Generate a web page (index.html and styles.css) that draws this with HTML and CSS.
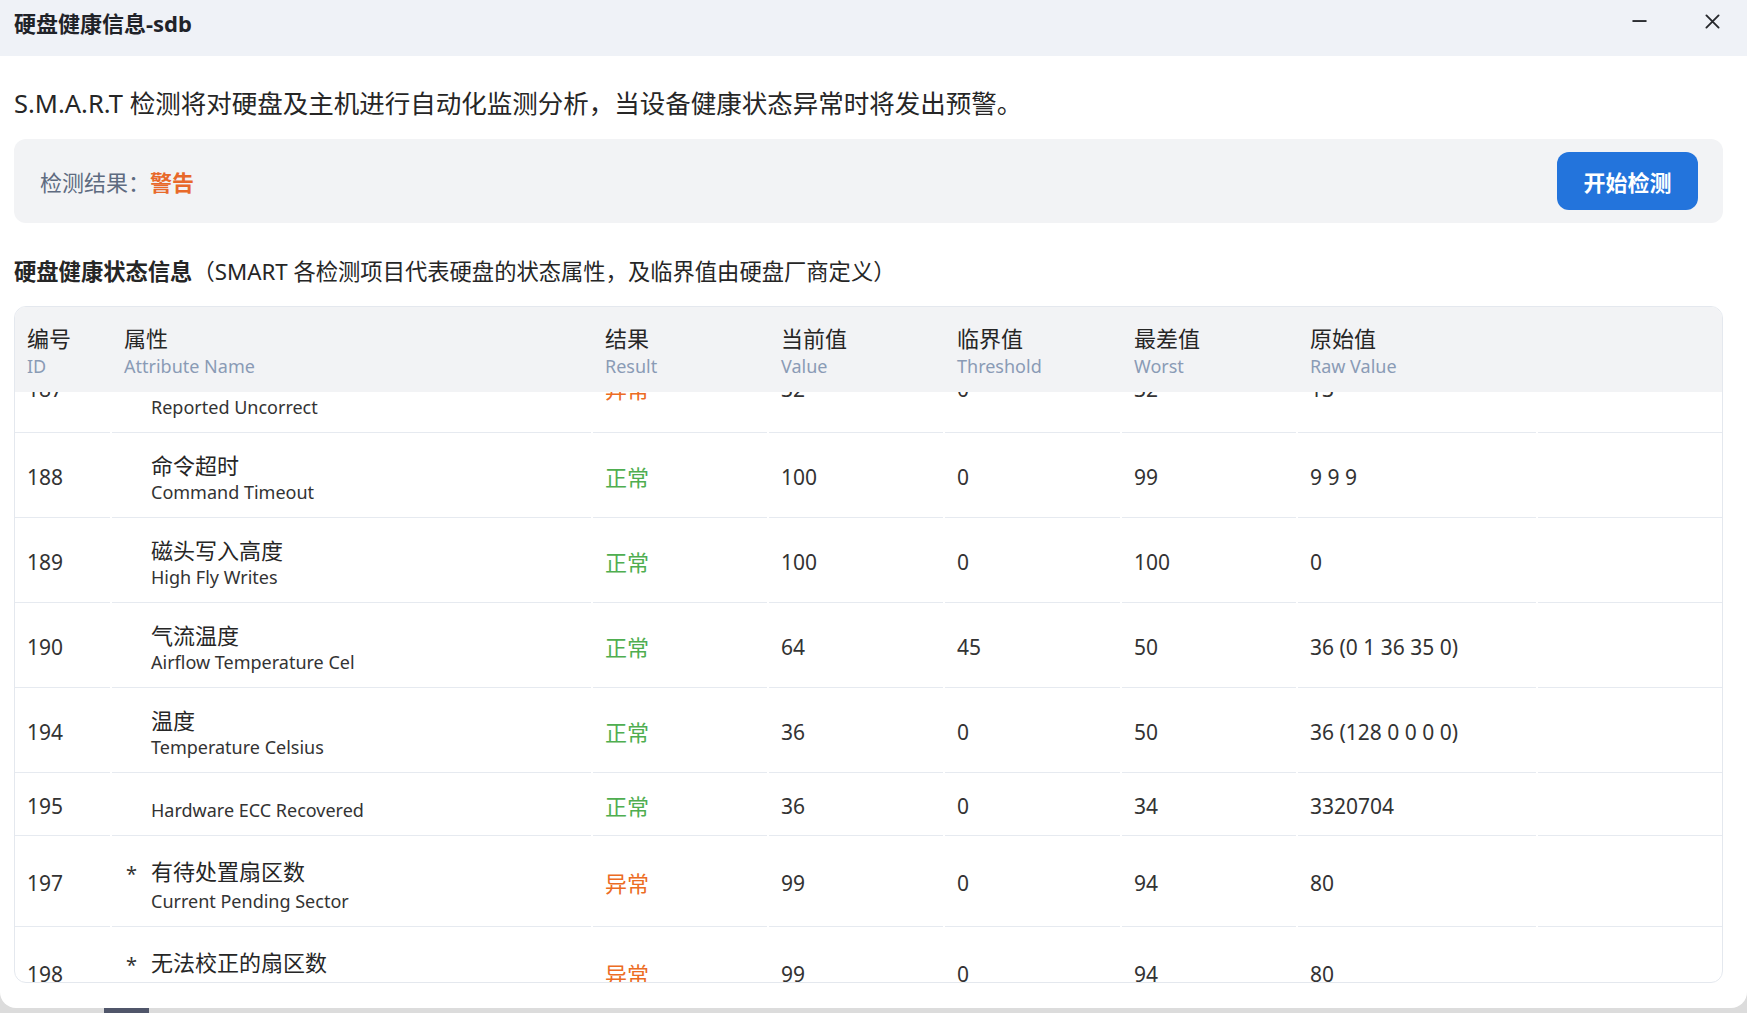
FILE: index.html
```html
<!DOCTYPE html>
<html lang="zh-CN">
<head>
<meta charset="utf-8">
<title>硬盘健康信息-sdb</title>
<link rel="stylesheet" href="styles.css">
</head>
<body>
<div class="window">
  <header class="titlebar">
    <h1 class="title">硬盘健康信息-sdb</h1>
    <div class="controls">
      <button class="ctl" aria-label="最小化"><svg viewBox="0 0 16 16" width="16" height="16"><path d="M0.5 7.5h15" stroke="#26282c" stroke-width="2" fill="none"/></svg></button>
      <button class="ctl" aria-label="关闭"><svg viewBox="0 0 16 16" width="16" height="16"><path d="M1.5 1.5l13 13M14.5 1.5l-13 13" stroke="#26282c" stroke-width="2" fill="none" stroke-linecap="round"/></svg></button>
    </div>
  </header>
  <main class="content">
    <p class="intro">S.M.A.R.T 检测将对硬盘及主机进行自动化监测分析，当设备健康状态异常时将发出预警。</p>
    <section class="result-box">
      <div class="result-label">检测结果：<span class="warn">警告</span></div>
      <button class="btn-primary">开始检测</button>
    </section>
    <h2 class="section-title"><strong>硬盘健康状态信息</strong>（SMART 各检测项目代表硬盘的状态属性，及临界值由硬盘厂商定义）</h2>
    <div class="table">
      <div class="thead grid">
        <div class="th"><span class="th-cn">编号</span><span class="th-en">ID</span></div>
        <div class="th"><span class="th-cn">属性</span><span class="th-en">Attribute Name</span></div>
        <div class="th"><span class="th-cn">结果</span><span class="th-en">Result</span></div>
        <div class="th"><span class="th-cn">当前值</span><span class="th-en">Value</span></div>
        <div class="th"><span class="th-cn">临界值</span><span class="th-en">Threshold</span></div>
        <div class="th"><span class="th-cn">最差值</span><span class="th-en">Worst</span></div>
        <div class="th"><span class="th-cn">原始值</span><span class="th-en">Raw Value</span></div>
        <div class="th"></div>
      </div>
      <div class="tbody">
        <div class="row grid">
          <div class="cell">187</div>
          <div class="cell cell-name flag"><span class="mark">*</span><span class="cn">报告的不可纠正错误</span><span class="en">Reported Uncorrect</span></div>
          <div class="cell"><span class="bad">异常</span></div>
          <div class="cell">32</div><div class="cell">0</div><div class="cell">32</div><div class="cell">13</div><div class="cell"></div>
        </div>
        <div class="row grid">
          <div class="cell">188</div>
          <div class="cell cell-name"><span class="cn">命令超时</span><span class="en">Command Timeout</span></div>
          <div class="cell"><span class="ok">正常</span></div>
          <div class="cell">100</div><div class="cell">0</div><div class="cell">99</div><div class="cell">9 9 9</div><div class="cell"></div>
        </div>
        <div class="row grid">
          <div class="cell">189</div>
          <div class="cell cell-name"><span class="cn">磁头写入高度</span><span class="en">High Fly Writes</span></div>
          <div class="cell"><span class="ok">正常</span></div>
          <div class="cell">100</div><div class="cell">0</div><div class="cell">100</div><div class="cell">0</div><div class="cell"></div>
        </div>
        <div class="row grid">
          <div class="cell">190</div>
          <div class="cell cell-name"><span class="cn">气流温度</span><span class="en">Airflow Temperature Cel</span></div>
          <div class="cell"><span class="ok">正常</span></div>
          <div class="cell">64</div><div class="cell">45</div><div class="cell">50</div><div class="cell">36 (0 1 36 35 0)</div><div class="cell"></div>
        </div>
        <div class="row grid">
          <div class="cell">194</div>
          <div class="cell cell-name"><span class="cn">温度</span><span class="en">Temperature Celsius</span></div>
          <div class="cell"><span class="ok">正常</span></div>
          <div class="cell">36</div><div class="cell">0</div><div class="cell">50</div><div class="cell">36 (128 0 0 0 0)</div><div class="cell"></div>
        </div>
        <div class="row grid">
          <div class="cell">195</div>
          <div class="cell cell-name"><span class="en">Hardware ECC Recovered</span></div>
          <div class="cell"><span class="ok">正常</span></div>
          <div class="cell">36</div><div class="cell">0</div><div class="cell">34</div><div class="cell">3320704</div><div class="cell"></div>
        </div>
        <div class="row grid">
          <div class="cell">197</div>
          <div class="cell cell-name flag"><span class="mark">*</span><span class="cn">有待处置扇区数</span><span class="en">Current Pending Sector</span></div>
          <div class="cell"><span class="bad">异常</span></div>
          <div class="cell">99</div><div class="cell">0</div><div class="cell">94</div><div class="cell">80</div><div class="cell"></div>
        </div>
        <div class="row grid">
          <div class="cell">198</div>
          <div class="cell cell-name flag"><span class="mark">*</span><span class="cn">无法校正的扇区数</span><span class="en">Offline Uncorrectable</span></div>
          <div class="cell"><span class="bad">异常</span></div>
          <div class="cell">99</div><div class="cell">0</div><div class="cell">94</div><div class="cell">80</div><div class="cell"></div>
        </div>
      </div>
    </div>
  </main>
</div>
<div class="taskbar"><span class="task-item"></span></div>
</body>
</html>
```

FILE: styles.css
```css
* { box-sizing: border-box; }
html, body { margin: 0; padding: 0; }
body {
  font-family: "Noto Sans", "Noto Sans CJK SC", sans-serif;
  background: #dcdcdc;
  color: #333;
  width: 1747px;
  height: 1013px;
  overflow: hidden;
}
.window {
  height: 1008px;
  background: #fff;
  border-radius: 0 0 16px 16px;
  overflow: hidden;
  display: flex;
  flex-direction: column;
}
.titlebar {
  height: 56px;
  flex: none;
  background: #eff2f7;
  display: flex;
  align-items: flex-start;
  justify-content: space-between;
  padding: 6px 20px 0 14px;
}
.title {
  margin: 2px 0 0;
  font-size: 22px;
  line-height: 30px;
  font-weight: 700;
  color: #1f2329;
}
.controls { display: flex; gap: 43px; }
.ctl {
  width: 30px;
  height: 30px;
  padding: 0;
  border: 0;
  background: transparent;
  display: flex;
  align-items: center;
  justify-content: center;
}
.ctl svg { width: 15px; height: 15px; }
.content {
  flex: 1;
  display: flex;
  flex-direction: column;
  padding: 0 24px 25px 14px;
}
.intro {
  margin: 30px 0 0;
  font-size: 25.5px;
  line-height: 34px;
  color: #262626;
}
.result-box {
  margin-top: 19px;
  height: 84px;
  flex: none;
  background: #f2f3f5;
  border-radius: 12px;
  display: flex;
  align-items: center;
  justify-content: space-between;
  padding: 0 25px 0 26px;
}
.result-label { font-size: 22px; color: #5e6b80; }
.warn { color: #e8692a; font-weight: 700; }
.btn-primary {
  width: 141px;
  height: 58px;
  border: 0;
  border-radius: 12px;
  background: #2374dc;
  color: #fff;
  font: 700 22px "Noto Sans", "Noto Sans CJK SC", sans-serif;
}
.section-title {
  margin: 34px 0 0;
  font-size: 22.3px;
  line-height: 30px;
  font-weight: 400;
  color: #262626;
}
.section-title strong { font-weight: 700; }
.table {
  margin-top: 19px;
  height: 677px;
  flex: none;
  border: 1px solid #e4e8ee;
  border-radius: 12px;
  overflow: hidden;
}
.grid {
  display: grid;
  grid-template-columns: 95px 479px 174px 174px 175px 174px 238px 1fr;
  column-gap: 2px;
}
.thead {
  position: sticky;
  top: 0;
  z-index: 1;
  height: 85px;
  background: #f2f3f5;
}
.th { padding: 16px 12px 0; }
.th-cn { display: block; font-size: 22px; line-height: 30px; color: #262626; }
.th-en { display: block; font-size: 18px; line-height: 26px; color: #8a9bb5; }
.tbody { margin-top: -50px; }
.cell {
  border-bottom: 1px solid #e6eaf0;
  display: flex;
  align-items: center;
  padding: 4px 12px 0;
  font-size: 21px;
  line-height: 30px;
  color: #333;
  white-space: nowrap;
}
.cell-name {
  display: grid;
  grid-template-columns: 27px 1fr;
  align-content: start;
  align-items: start;
  padding: 21px 12px 12px;
}
.mark {
  grid-column: 1;
  grid-row: 1;
  font-size: 20px;
  line-height: 28px;
  height: 28px;
  padding-left: 2px;
  color: #333;
}
.cn { grid-column: 2; font-size: 22px; line-height: 22px; color: #262626; }
.en { grid-column: 2; font-size: 18px; line-height: 26px; color: #333; margin-top: 3px; }
.flag .cn, .flag .mark { margin-top: 3px; }
.flag .en { margin-top: 0; }
.ok { color: #4fae50; font-size: 22px; }
.bad { color: #ec6c24; font-size: 22px; }
.taskbar { height: 5px; display: flex; }
.task-item { margin-left: 104px; width: 45px; background: #50566a; }
```
